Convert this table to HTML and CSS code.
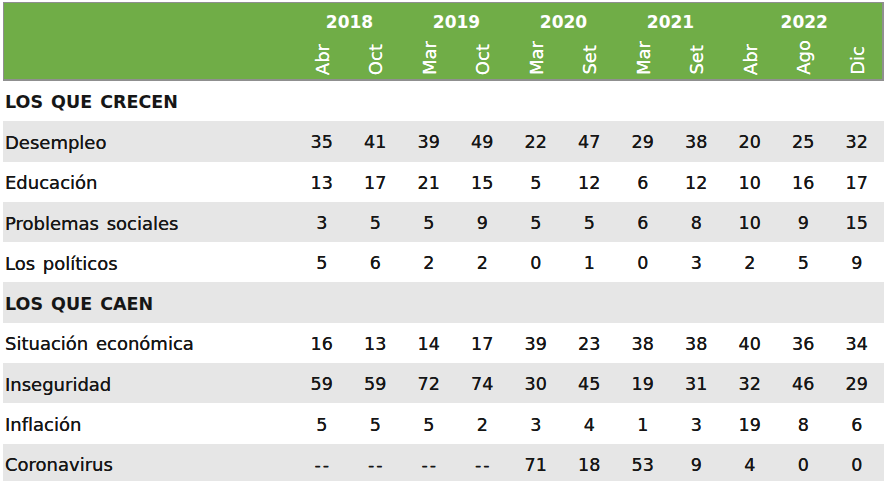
FILE: index.html
```html
<!DOCTYPE html>
<html lang="es">
<head>
<meta charset="utf-8">
<title>Problemas</title>
<link rel="stylesheet" href="styles.css">
</head>
<body>
<div class="table">
  <div class="head">
    <div class="years">
      <div class="corner"></div>
      <div class="year span2">2018</div>
      <div class="year span2">2019</div>
      <div class="year span2">2020</div>
      <div class="year span2">2021</div>
      <div class="year span3">2022</div>
    </div>
    <div class="months">
      <div class="corner"></div>
      <div class="month"><span>Abr</span></div>
      <div class="month"><span>Oct</span></div>
      <div class="month"><span>Mar</span></div>
      <div class="month"><span>Oct</span></div>
      <div class="month"><span>Mar</span></div>
      <div class="month"><span>Set</span></div>
      <div class="month"><span>Mar</span></div>
      <div class="month"><span>Set</span></div>
      <div class="month"><span>Abr</span></div>
      <div class="month"><span>Ago</span></div>
      <div class="month"><span>Dic</span></div>
    </div>
  </div>

  <div class="row section"><div class="label">LOS QUE CRECEN</div></div>
  <div class="row shade"><div class="label">Desempleo</div><div>35</div><div>41</div><div>39</div><div>49</div><div>22</div><div>47</div><div>29</div><div>38</div><div>20</div><div>25</div><div>32</div></div>
  <div class="row"><div class="label">Educación</div><div>13</div><div>17</div><div>21</div><div>15</div><div>5</div><div>12</div><div>6</div><div>12</div><div>10</div><div>16</div><div>17</div></div>
  <div class="row shade"><div class="label">Problemas sociales</div><div>3</div><div>5</div><div>5</div><div>9</div><div>5</div><div>5</div><div>6</div><div>8</div><div>10</div><div>9</div><div>15</div></div>
  <div class="row"><div class="label">Los políticos</div><div>5</div><div>6</div><div>2</div><div>2</div><div>0</div><div>1</div><div>0</div><div>3</div><div>2</div><div>5</div><div>9</div></div>
  <div class="row section shade"><div class="label">LOS QUE CAEN</div></div>
  <div class="row"><div class="label">Situación económica</div><div>16</div><div>13</div><div>14</div><div>17</div><div>39</div><div>23</div><div>38</div><div>38</div><div>40</div><div>36</div><div>34</div></div>
  <div class="row shade"><div class="label">Inseguridad</div><div>59</div><div>59</div><div>72</div><div>74</div><div>30</div><div>45</div><div>19</div><div>31</div><div>32</div><div>46</div><div>29</div></div>
  <div class="row"><div class="label">Inflación</div><div>5</div><div>5</div><div>5</div><div>2</div><div>3</div><div>4</div><div>1</div><div>3</div><div>19</div><div>8</div><div>6</div></div>
  <div class="row shade"><div class="label">Coronavirus</div><div class="na">--</div><div class="na">--</div><div class="na">--</div><div class="na">--</div><div>71</div><div>18</div><div>53</div><div>9</div><div>4</div><div>0</div><div>0</div></div>
</div>
</body>
</html>
```

FILE: styles.css
```css
html, body {
  margin: 0;
  padding: 0;
  background: #ffffff;
}

body {
  font-family: "DejaVu Sans", "Liberation Sans", sans-serif;
  font-size: 17.5px;
  color: #161616;
  overflow: hidden;
}

.table {
  margin: 2px 0 0 3px;
  width: 881px;
}

.head {
  background: #70ad47;
  border-top: 1px solid #8f8f8f;
  border-left: 1px solid #8f8f8f;
  border-right: 2px solid #8f8f8f;
  border-bottom: 2px solid #8f8f8f;
  height: 76px;
  color: #ffffff;
}

.years,
.months,
.row {
  display: grid;
  grid-template-columns: 292px repeat(11, 53.5px);
}

.years {
  height: 31px;
  align-items: end;
}

.year {
  font-weight: bold;
  font-size: 17px;
  text-align: center;
  line-height: 20px;
  padding-bottom: 2px;
}

.span2 { grid-column: span 2; }
.span3 { grid-column: span 3; }

.months {
  height: 45px;
}

.month {
  display: flex;
  justify-content: center;
  align-items: flex-end;
  padding-bottom: 4px;
}

.month span {
  writing-mode: vertical-rl;
  transform: rotate(180deg);
  line-height: 18px;
  font-size: 18px;
  text-shadow: 0 0 0.6px #ffffff;
}

.row {
  height: 40.3px;
  align-items: center;
  text-align: center;
  padding-top: 2px;
  box-sizing: border-box;
  text-shadow: 0 0 0.4px #161616;
}

.row .label {
  text-align: left;
  padding-left: 2px;
  font-size: 18px;
  word-spacing: 2px;
}

.section .label {
  font-weight: bold;
  font-size: 17.5px;
  grid-column: 1 / -1;
  text-shadow: none;
}

.na {
  letter-spacing: 2px;
  padding-left: 2px;
}

.shade {
  background: #e6e6e6;
}
```
